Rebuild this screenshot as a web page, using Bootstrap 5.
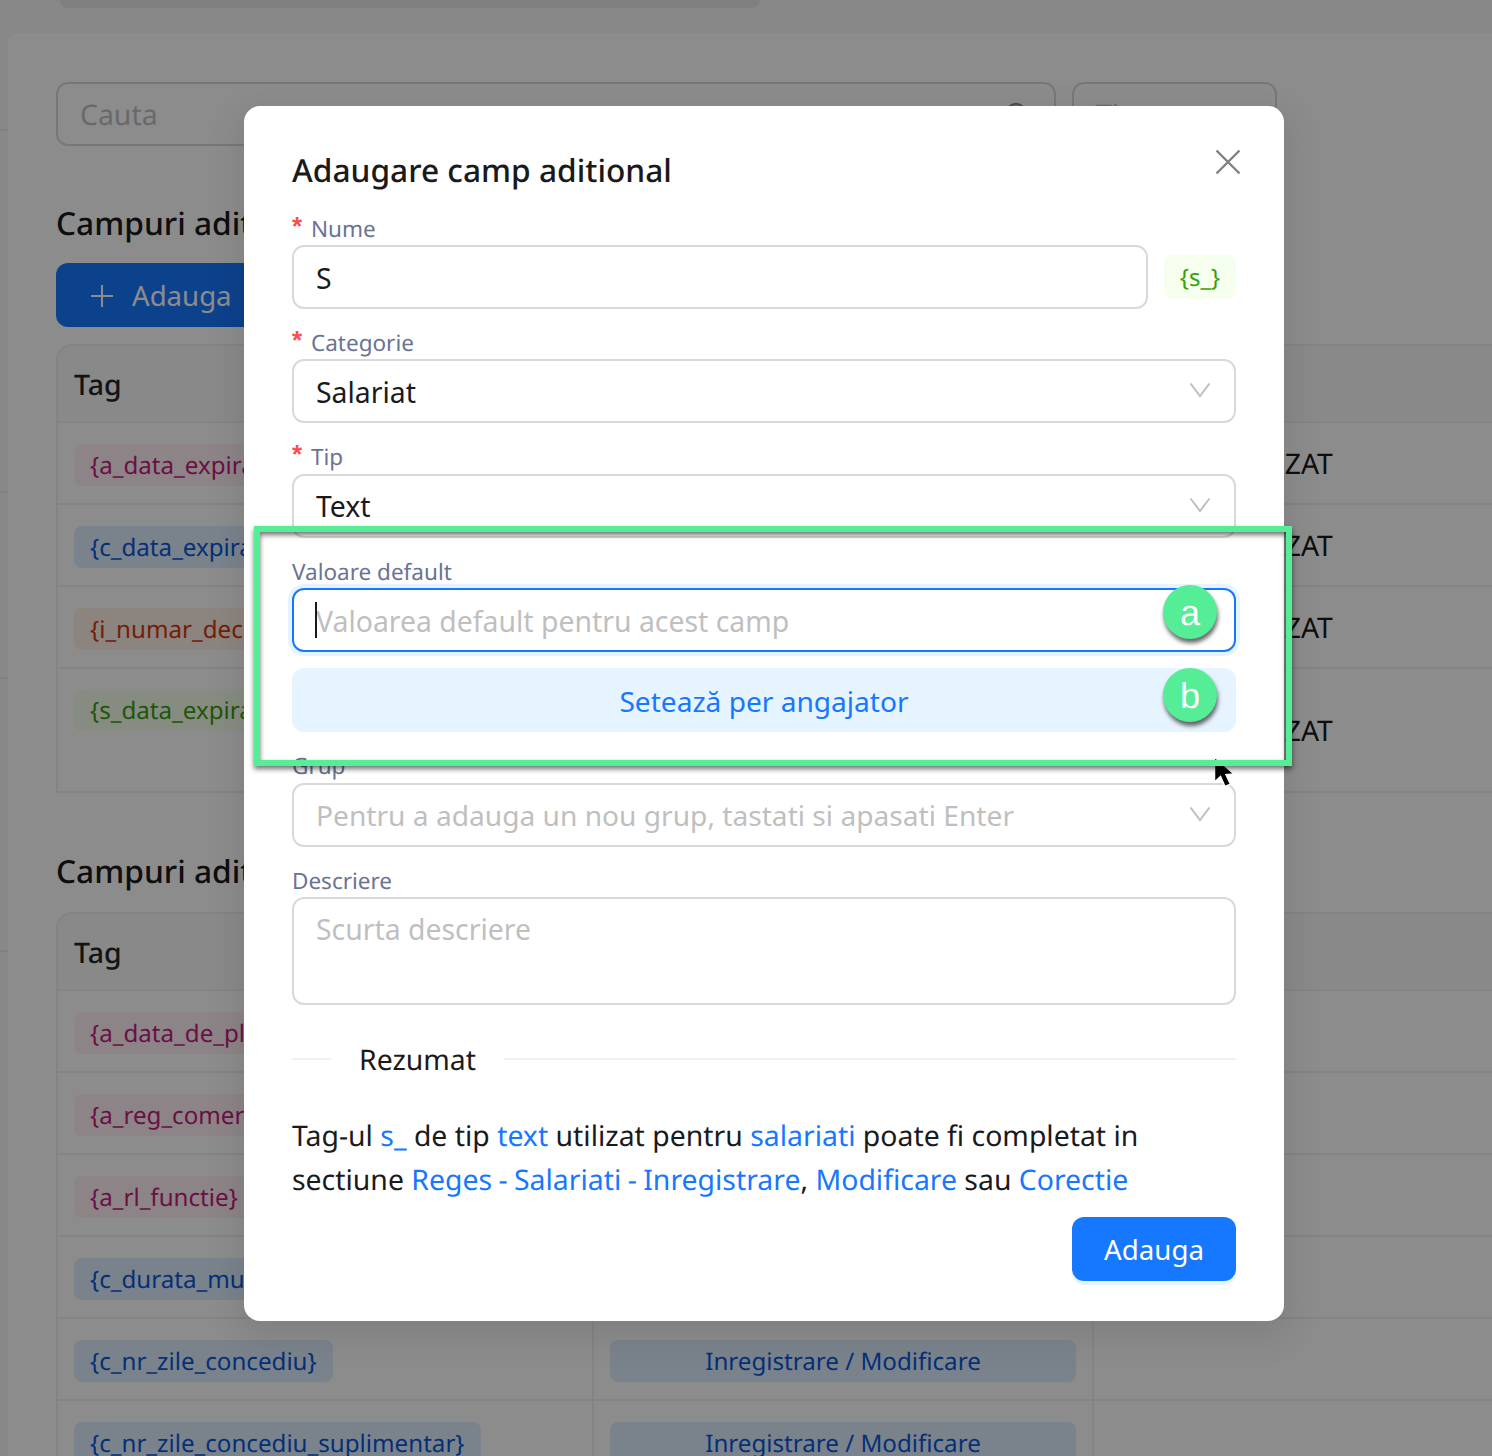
<!DOCTYPE html>
<html lang="ro">
<head>
<meta charset="utf-8">
<title>Adaugare camp aditional</title>
<link href="https://cdn.jsdelivr.net/npm/bootstrap@5.3.0/dist/css/bootstrap.min.css" rel="stylesheet">
<style>
html,body{margin:0;background:#fff}
body{font-family:"Noto Sans","Open Sans",sans-serif;color:#1a1a1a;text-rendering:geometricPrecision}
.stage{width:1492px;height:1456px;position:relative;overflow:hidden;background:#f7f7f7}
.topbar{height:33px}
.topbar-pill{margin-left:60px;width:700px;height:8px;background:#e9e9e9;border-radius:0 0 12px 12px}
.siderail{flex:0 0 8px;width:8px}
.railrow{border-bottom:2px solid #ebebeb}
.rr1{height:98px}.rr2{height:362px}.rr3{height:186px}.rr4{height:273px}
.sheet{flex:1 1 auto;min-width:0;background:#fff;padding:49px 0 0 48px;min-height:1500px;border-radius:12px 0 0 0}
.searchrow{gap:16px;height:64px}
.fakebox{height:64px;border:2px solid #d9d9d9;border-radius:12px;font-size:28.4px;color:#bfbfbf;padding:2px 22px 0;display:flex;align-items:center;background:#fff}
.fb-search{width:1000px;justify-content:space-between}
.fb-filter{width:205px}
.sect-title{font-size:31.7px;font-weight:500;line-height:44px;margin:56px 0 17px;color:#1a1a1a}
.sect-title.second{margin:57px 0 18px}
.addbtn{display:flex;align-items:center;gap:18px;width:240px;height:64px;font-size:27.6px;border-radius:12px;background:#1677ff;color:#fff;padding:2px 34px 0;margin-bottom:17px;border:0}
.grid-t{table-layout:fixed;width:1500px;border-collapse:separate;border-spacing:0;margin:0;font-size:24px}
.grid-t th,.grid-t td{border:0;border-bottom:2px solid #f0f0f0;border-right:2px solid #f0f0f0;padding:21px 16px 0;background:transparent;box-shadow:none;line-height:42px}
.grid-t th:first-child,.grid-t td:first-child{border-left:2px solid #f0f0f0}
.grid-t tr:first-child th{border-top:2px solid #f0f0f0;background:#fafafa;font-size:28.4px;font-weight:500;height:79px;padding:2px 16px 0;vertical-align:middle}
.grid-t tr:first-child th:first-child{border-top-left-radius:16px}
.grid-t .c1{width:538px}.grid-t .c2{width:500px}
.grid-t td{height:82px;vertical-align:top;color:#1a1a1a}
.grid-t td.status{font-size:28.4px;padding:2px 0 0 120px;vertical-align:middle}
.grid-t tr.tall td{height:124px;padding-top:20px}
.grid-t tr.tall td.status{padding-top:2px}
.chip{display:inline-block;height:42px;line-height:43px;padding:0 16px;border-radius:8px;font-size:24.15px;white-space:nowrap;vertical-align:top}
.chip-a{background:#fff0f6;color:#c41d7f}
.chip-c{background:#dfeeff;color:#0958d9}
.chip-i{background:#fff2e8;color:#d4380d}
.chip-s{background:#f6ffed;color:#389e0d}
.chip-wide{display:block;text-align:center;background:#dfeeff;color:#0958d9}
.mask{position:absolute;inset:0;background:rgba(0,0,0,.45)}
.dlg{position:absolute;left:244px;top:106px;width:1040px;height:1215px;background:#fff;border-radius:16px;padding:40px 48px;box-shadow:0 12px 32px 8px rgba(0,0,0,.08)}
.dlg-title{font-size:31.7px;font-weight:500;line-height:50px;height:65px;color:#1a1a1a;margin:0}
.xbtn{position:absolute;top:42px;right:42px;width:28px;height:28px;padding:0;border:0;background:none;display:flex}
.fgroup{margin-bottom:16.4px}
.flabel{display:flex;align-items:center;height:34px;margin:0;font-size:22.5px;color:#6b7394;padding-top:1px}
.star{color:#ff4d4f;font-size:26px;width:19px;line-height:1;position:relative;top:-3px;font-family:"Liberation Sans",sans-serif;font-weight:700}
.fld{height:64px;border:2px solid #d9d9d9;border-radius:12px;font-size:28.4px;padding:2px 22px 0;color:#1a1a1a;box-shadow:none;background-image:none}
.fld::placeholder{color:#bfbfbf;opacity:1}
.fld.is-focus{border-color:#1677ff;box-shadow:0 0 0 4px rgba(5,145,255,.1);outline:0}
.fld.dim{color:#bfbfbf;font-size:28.15px}
textarea.fld{height:108px;padding:9px 22px;resize:none}
.selwrap{position:relative}
.chev{position:absolute;right:25px;top:23px;width:22px;height:16px;pointer-events:none}
.nametag{flex:0 0 72px;height:44px;line-height:46px;text-align:center;background:#f6ffed;color:#389e0d;font-size:24px;border-radius:8px}
.softbtn{display:block;width:100%;height:64px;margin-top:16px;border:0;border-radius:12px;background:#e6f4ff;color:#1677ff;font-size:28.1px;padding:1px 0 0}
.softbtn:hover{background:#e6f4ff;color:#1677ff}
.divrow{display:flex;align-items:center;height:44px;margin-top:33px;font-size:28.4px;color:#1a1a1a}
.divline{height:2px;background:#f0f0f0;margin-top:-2px}
.dl-l{width:39px}.dl-r{flex:1}
.divtxt{padding:1px 28px 0}
.summary{font-size:28.4px;line-height:44px;margin:32px 0 15px;color:#1a1a1a}
.summary span{color:#1677ff}
.hy{margin:0 -1px}
.savebtn{width:164px;height:64px;font-size:27.7px;border-radius:12px;background:#1677ff;border:0;color:#fff;box-shadow:0 4px 0 rgba(5,145,255,.1);padding:2px 0 0}
.savebtn:hover{background:#1677ff}
.textcaret{position:absolute;left:23px;top:14px;width:2px;height:36px;background:#1a1a1a}
.annot{position:absolute;left:254px;top:526px;width:1038px;height:240px;border:6px solid #55ee96;box-shadow:0 3px 5px rgba(0,0,0,.55),inset 0 3px 5px rgba(0,0,0,.55);pointer-events:none}
.dot{position:absolute;left:1163px;width:54px;height:54px;border-radius:50%;background:#55ee96;color:#fff;font-family:"Liberation Sans",sans-serif;font-size:36px;line-height:56px;text-align:center;box-shadow:1px 4px 4px rgba(0,0,0,.6)}
.dot-a{top:585px}.dot-b{top:668px}
.ptr{position:absolute;left:1212px;top:756px;width:24px;height:34px}
</style>
</head>
<body>
<div class="stage">
  <div class="topbar"><div class="topbar-pill"></div></div>
  <div class="d-flex">
    <div class="siderail">
      <div class="railrow rr1"></div><div class="railrow rr2"></div><div class="railrow rr3"></div><div class="railrow rr4"></div>
    </div>
    <div class="sheet">
      <div class="d-flex searchrow">
        <div class="fakebox fb-search"><span>Cauta</span>
          <svg width="28" height="28" viewBox="0 0 28 28" fill="none" stroke="#8c8c8c" stroke-width="2.5"><circle cx="12" cy="12" r="9"/><path d="M19 19l7 7"/></svg>
        </div>
        <div class="fakebox fb-filter">Tip</div>
      </div>
      <h2 class="sect-title">Campuri aditionale</h2>
      <button class="addbtn" type="button">
        <svg width="24" height="24" viewBox="0 0 24 24" stroke="#fff" stroke-width="2"><path d="M12 1v22M1 12h22"/></svg>Adauga
      </button>
      <table class="table grid-t">
        <colgroup><col class="c1"><col class="c2"><col></colgroup>
        <tr><th>Tag</th><th>Sectiune</th><th>Status</th></tr>
        <tr><td><span class="chip chip-a">{a_data_expirare}</span></td><td></td><td class="status">UTILIZAT</td></tr>
        <tr><td><span class="chip chip-c">{c_data_expirare}</span></td><td></td><td class="status">UTILIZAT</td></tr>
        <tr><td><span class="chip chip-i">{i_numar_decizie}</span></td><td></td><td class="status">UTILIZAT</td></tr>
        <tr class="tall"><td><span class="chip chip-s">{s_data_expirare}</span></td><td></td><td class="status">UTILIZAT</td></tr>
      </table>
      <h2 class="sect-title second">Campuri aditionale</h2>
      <table class="table grid-t">
        <colgroup><col class="c1"><col class="c2"><col></colgroup>
        <tr><th>Tag</th><th>Sectiune</th><th>Status</th></tr>
        <tr><td><span class="chip chip-a">{a_data_de_plata}</span></td><td></td><td></td></tr>
        <tr><td><span class="chip chip-a">{a_reg_comert}</span></td><td></td><td></td></tr>
        <tr><td><span class="chip chip-a">{a_rl_functie}</span></td><td></td><td></td></tr>
        <tr><td><span class="chip chip-c">{c_durata_munca}</span></td><td></td><td></td></tr>
        <tr><td><span class="chip chip-c">{c_nr_zile_concediu}</span></td><td><span class="chip chip-wide">Inregistrare / Modificare</span></td><td></td></tr>
        <tr><td><span class="chip chip-c">{c_nr_zile_concediu_suplimentar}</span></td><td><span class="chip chip-wide">Inregistrare / Modificare</span></td><td></td></tr>
      </table>
    </div>
  </div>

  <div class="mask"></div>

  <div class="dlg">
    <h1 class="dlg-title">Adaugare camp aditional</h1>
    <button class="xbtn" type="button" aria-label="Inchide">
      <svg width="28" height="28" viewBox="0 0 28 28" stroke="#808080" stroke-width="2.4"><path d="M2.500 2.500l23 23M25.500 2.500l-23 23"/></svg>
    </button>
    <div class="fgroup">
      <label class="flabel"><span class="star">*</span>Nume</label>
      <div class="d-flex align-items-center gap-3">
        <input class="form-control fld flex-grow-1" value="S">
        <span class="nametag">{s_}</span>
      </div>
    </div>
    <div class="fgroup">
      <label class="flabel"><span class="star">*</span>Categorie</label>
      <div class="selwrap">
        <select class="form-select fld"><option>Salariat</option></select>
        <svg class="chev" viewBox="0 0 22 16" fill="none" stroke="#bfbfbf" stroke-width="2"><path d="M1.500 1.500L11 14 20.500 1.500"/></svg>
      </div>
    </div>
    <div class="fgroup">
      <label class="flabel"><span class="star">*</span>Tip</label>
      <div class="selwrap">
        <select class="form-select fld"><option>Text</option></select>
        <svg class="chev" viewBox="0 0 22 16" fill="none" stroke="#bfbfbf" stroke-width="2"><path d="M1.500 1.500L11 14 20.500 1.500"/></svg>
      </div>
    </div>
    <div class="fgroup">
      <label class="flabel">Valoare default</label>
      <div class="position-relative">
        <input class="form-control fld is-focus" placeholder="Valoarea default pentru acest camp">
        <span class="textcaret"></span>
      </div>
      <button class="btn softbtn" type="button">Setează per angajator</button>
    </div>
    <div class="fgroup">
      <label class="flabel">Grup</label>
      <div class="selwrap">
        <select class="form-select fld dim"><option>Pentru a adauga un nou grup, tastati si apasati Enter</option></select>
        <svg class="chev" viewBox="0 0 22 16" fill="none" stroke="#bfbfbf" stroke-width="2"><path d="M1.500 1.500L11 14 20.500 1.500"/></svg>
      </div>
    </div>
    <div>
      <label class="flabel">Descriere</label>
      <textarea class="form-control fld" placeholder="Scurta descriere"></textarea>
    </div>
    <div class="divrow"><div class="divline dl-l"></div><div class="divtxt">Rezumat</div><div class="divline dl-r"></div></div>
    <p class="summary">Tag-ul <span>s_</span> de tip <span>text</span> utilizat pentru <span>salariati</span> poate fi completat in sectiune <span>Reges <b class="hy fw-normal">-</b> Salariati <b class="hy fw-normal">-</b> Inregistrare</span>, <span>Modificare</span> sau <span>Corectie</span></p>
    <div class="d-flex justify-content-end"><button class="btn btn-primary savebtn" type="button">Adauga</button></div>
  </div>

  <svg class="ptr" viewBox="0 0 24 34"><path d="M2.500 1v25l6-5.500 4.500 10 5.500-2.400-4.500-9.500 8-.6z" fill="#000" stroke="#fff" stroke-width="1.500"/></svg>
  <div class="annot"></div>
  <div class="dot dot-a">a</div>
  <div class="dot dot-b">b</div>
</div>
<script src="https://cdn.jsdelivr.net/npm/bootstrap@5.3.0/dist/js/bootstrap.bundle.min.js"></script>
</body>
</html>
